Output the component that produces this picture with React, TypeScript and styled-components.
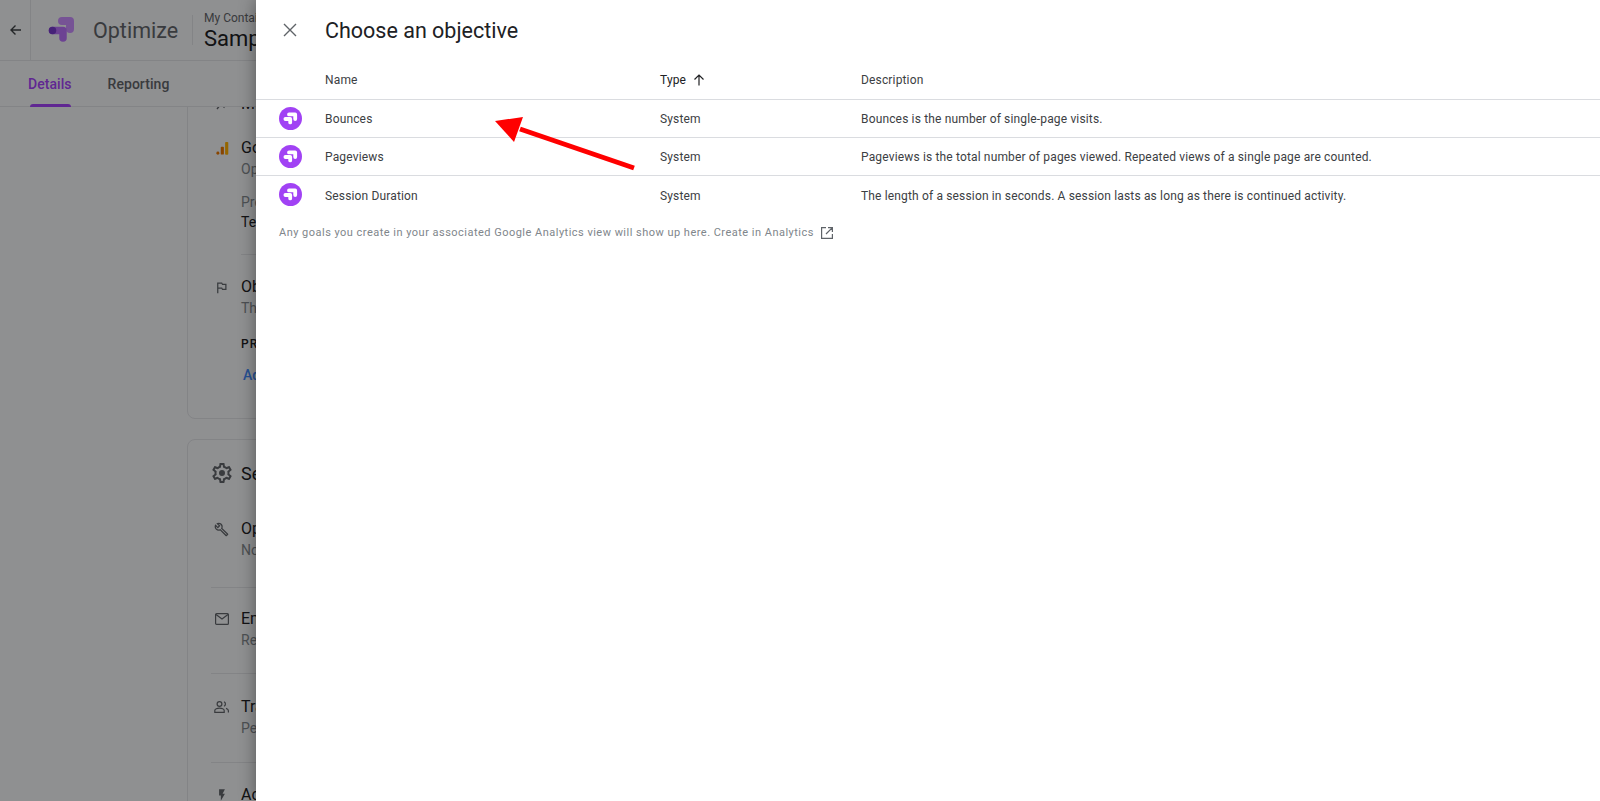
import React from "react";
import styled, { createGlobalStyle } from "styled-components";

const Global = createGlobalStyle`
  html, body { margin: 0; padding: 0; height: 100%; background: #eff0f2; }
  body { font-family: Roboto, "Liberation Sans", sans-serif; color: #202124; }
  #root { height: 100%; }
`;

const Screen = styled.div`
  position: relative;
  width: 1600px;
  height: 801px;
  overflow: hidden;
  background: #eff0f2;
`;

const Page = styled.div`
  display: flex;
  flex-direction: column;
  height: 100%;
`;

const Header = styled.header`
  display: flex;
  align-items: center;
  height: 61px;
  box-sizing: border-box;
  border-bottom: 1px solid #dadce0;
  flex: none;
`;

const BackCell = styled.div`
  width: 31px;
  height: 60px;
  box-sizing: border-box;
  padding-left: 2px;
  display: flex;
  align-items: center;
  justify-content: center;
  border-right: 1px solid #dadce0;
  color: #3c4043;
  flex: none;
`;

const Logo = styled.svg`
  width: 26px;
  height: 26px;
  margin-left: 17px;
  flex: none;
`;

const Product = styled.div`
  font-size: 21.5px;
  color: #5f6368;
  margin-left: 19px;
  width: 99px;
  flex: none;
`;

const Divider = styled.div`
  width: 1px;
  height: 30px;
  background: #dadce0;
  flex: none;
`;

const Crumbs = styled.div`
  margin-left: 11px;
  padding-top: 2px;
  display: flex;
  flex-direction: column;
  white-space: nowrap;
`;

const CrumbTop = styled.div`
  font-size: 12px;
  line-height: 15px;
  color: #5f6368;
`;

const CrumbName = styled.div`
  font-size: 22px;
  line-height: 26px;
  color: #202124;
`;

const Tabs = styled.nav`
  display: flex;
  height: 46px;
  box-sizing: border-box;
  border-bottom: 1px solid #dadce0;
  padding-left: 28px;
  gap: 36px;
  flex: none;
`;

const Tab = styled.div<{ $active?: boolean }>`
  position: relative;
  font-size: 14px;
  font-weight: 500;
  letter-spacing: 0.05px;
  line-height: 46px;
  height: 45px;
  color: ${(p) => (p.$active ? "#a142f4" : "#5f6368")};
  &::after {
    content: "";
    display: ${(p) => (p.$active ? "block" : "none")};
    position: absolute;
    left: 2px;
    right: 1px;
    bottom: -1px;
    height: 3px;
    border-radius: 3px 3px 0 0;
    background: #a142f4;
  }
`;

const Scroller = styled.main`
  flex: 1;
  overflow: hidden;
  padding-left: 187px;
`;

const Card = styled.section`
  width: 1200px;
  box-sizing: border-box;
  border: 1px solid #dadce0;
  border-radius: 8px;
  padding: 0 23px;
  margin-bottom: 20px;
  &:first-child {
    margin-top: -48px;
    height: 360px;
    padding-top: 34px;
  }
`;

const CardTitle = styled.div`
  display: flex;
  align-items: center;
  gap: 7px;
  font-size: 18px;
  color: #202124;
  height: 24px;
  margin: 21px 0 34px -1px;
`;

const SmallTitle = styled.div`
  display: flex;
  align-items: center;
  gap: 12px;
  font-size: 16px;
  color: #202124;
  height: 18px;
  margin-bottom: 26px;
`;

const Row = styled.div<{ $h: number; $line?: boolean; $pt?: number }>`
  display: flex;
  gap: 12px;
  height: ${(p) => p.$h}px;
  box-sizing: border-box;
  border-bottom: ${(p) => (p.$line ? "1px solid #dadce0" : "none")};
  padding-top: ${(p) => p.$pt ?? 0}px;
`;

const RowIcon = styled.div`
  width: 18px;
  height: 20px;
  display: flex;
  align-items: center;
  justify-content: flex-end;
  color: #5f6368;
  flex: none;
`;

const RowBody = styled.div`
  flex: 1;
`;

const RowTitle = styled.div`
  font-size: 16px;
  line-height: 20px;
  color: #202124;
`;

const RowSub = styled.div`
  font-size: 14px;
  line-height: 20px;
  margin-top: 1px;
  color: #80868b;
`;

const FieldLabel = styled(RowSub)`
  margin-top: 13px;
`;

const FieldValue = styled.div`
  font-size: 14px;
  line-height: 20px;
  color: #202124;
`;

const RuleAfter = styled.div`
  height: 1px;
  background: #dadce0;
  margin: 22px 0;
`;

const Caps = styled.div`
  font-size: 12px;
  line-height: 14px;
  font-weight: 500;
  letter-spacing: 1px;
  margin-top: 19px;
  color: #202124;
`;

const LinkText = styled.div`
  font-size: 14px;
  font-weight: 500;
  line-height: 20px;
  margin: 14px 0 0 2px;
  color: #4285f4;
`;

const Scrim = styled.div`
  position: absolute;
  inset: 0;
  background: rgba(0, 0, 0, 0.4);
`;

const Drawer = styled.aside`
  position: absolute;
  top: 0;
  bottom: 0;
  left: 256px;
  right: 0;
  background: #fff;
  box-shadow: 0 0 16px rgba(0, 0, 0, 0.4);
`;

const DrawerHeader = styled.div`
  display: flex;
  align-items: center;
  height: 60px;
  padding-left: 26px;
  gap: 27px;
`;

const DrawerTitle = styled.h1`
  margin: 0;
  font-size: 21.5px;
  font-weight: 400;
  color: #202124;
`;

const TableRow = styled.div<{ $head?: boolean; $line?: boolean }>`
  display: grid;
  grid-template-columns: 46px 335px 201px 1fr;
  align-items: center;
  box-sizing: border-box;
  height: ${(p) => (p.$head ? 39.5 : 38)}px;
  padding-left: 23px;
  font-size: 12px;
  letter-spacing: 0.155px;
  color: #3c4043;
  border-bottom: ${(p) => (p.$line ? "1px solid #dadce0" : "none")};
`;

const Cell = styled.span`
  padding-top: 2px;
`;

const SortCell = styled.div`
  display: flex;
  align-items: center;
  gap: 7px;
  padding-top: 2px;
  color: #202124;
`;

const Badge = styled.svg`
  width: 23px;
  height: 23px;
  display: block;
`;

const Note = styled.div`
  display: flex;
  align-items: center;
  gap: 6px;
  padding: 12px 0 0 23px;
  font-size: 11px;
  letter-spacing: 0.48px;
  color: #80868b;
`;

const Annotation = styled.svg`
  position: absolute;
  left: 0;
  top: 0;
  pointer-events: none;
`;

const OptimizeBadge = () => (
  <Badge viewBox="0 0 23 23">
    <circle cx="11.5" cy="11.5" r="11.5" fill="#a142f4" />
    <g fill="none" stroke="#fff" strokeWidth="3.8" strokeLinejoin="round" strokeLinecap="round">
      <path d="M10 7.4H16.2V12" />
      <path d="M6.4 12H11.2V15.4" />
    </g>
  </Badge>
);

const rows = [
  ["Bounces", "Bounces is the number of single-page visits."],
  ["Pageviews", "Pageviews is the total number of pages viewed. Repeated views of a single page are counted."],
  ["Session Duration", "The length of a session in seconds. A session lasts as long as there is continued activity."],
];

const gearPath =
  "M19.43 12.98c.04-.32.07-.64.07-.98 0-.34-.03-.66-.07-.98l2.11-1.65c.19-.15.24-.42.12-.64l-2-3.46c-.09-.16-.26-.25-.44-.25-.06 0-.12.01-.17.03l-2.49 1c-.52-.4-1.08-.73-1.69-.98l-.38-2.65C14.46 2.18 14.25 2 14 2h-4c-.25 0-.46.18-.49.42l-.38 2.65c-.61.25-1.17.59-1.69.98l-2.49-1c-.06-.02-.12-.03-.18-.03-.17 0-.34.09-.43.25l-2 3.46c-.13.22-.07.49.12.64l2.11 1.65c-.04.32-.07.65-.07.98 0 .33.03.66.07.98l-2.11 1.65c-.19.15-.24.42-.12.64l2 3.46c.09.16.26.25.44.25.06 0 .12-.01.17-.03l2.49-1c.52.4 1.08.73 1.69.98l.38 2.65c.03.24.24.42.49.42h4c.25 0 .46-.18.49-.42l.38-2.65c.61-.25 1.17-.59 1.69-.98l2.49 1c.06.02.12.03.18.03.17 0 .34-.09.43-.25l2-3.46c.12-.22.07-.49-.12-.64l-2.11-1.65zm-1.98-1.71c.04.31.05.52.05.73 0 .21-.02.43-.05.73l-.14 1.13.89.7 1.08.84-.7 1.21-1.27-.51-1.04-.42-.9.68c-.43.32-.84.56-1.25.73l-1.06.43-.16 1.13-.2 1.35h-1.4l-.19-1.35-.16-1.13-1.06-.43c-.43-.18-.83-.41-1.23-.71l-.91-.7-1.06.43-1.27.51-.7-1.21 1.08-.84.89-.7-.14-1.13c-.03-.31-.05-.54-.05-.74s.02-.43.05-.73l.14-1.13-.89-.7-1.08-.84.7-1.21 1.27.51 1.04.42.9-.68c.43-.32.84-.56 1.25-.73l1.06-.43.16-1.13.2-1.35h1.39l.19 1.35.16 1.13 1.06.43c.43.18.83.41 1.23.71l.91.7 1.06-.43 1.27-.51.7 1.21-1.07.85-.89.7.14 1.13zM12 9a3 3 0 1 0 0 6 3 3 0 0 0 0-6z";

const buildPath =
  "M22.61 18.99l-9.08-9.08c.93-2.34.45-5.1-1.44-7C9.79.61 6.21.4 3.66 2.26L7.5 6.11 6.08 7.52 2.25 3.69C.39 6.23.6 9.82 2.9 12.11c1.86 1.86 4.57 2.35 6.89 1.48l9.11 9.11c.39.39 1.02.39 1.41 0l2.3-2.3c.4-.38.4-1.01 0-1.41zm-3 1.6l-9.46-9.46c-.61.45-1.29.72-2 .82-1.36.2-2.79-.21-3.83-1.25C3.37 9.76 2.93 8.5 3 7.26l3.09 3.09 4.24-4.24-3.09-3.09c1.24-.07 2.49.37 3.44 1.31 1.08 1.08 1.49 2.57 1.24 3.96-.12.71-.42 1.37-.88 1.96l9.45 9.45-.88.88z";

export default function App() {
  return (
    <Screen>
      <Global />
      <Page>
        <Header>
          <BackCell>
            <svg width="14" height="14" viewBox="0 0 14 14" fill="none" stroke="currentColor" strokeWidth="1.4">
              <path d="M12 7H2M6.5 2.5 2 7l4.5 4.5" />
            </svg>
          </BackCell>
          <Logo viewBox="0 0 26 26" fill="none" strokeLinejoin="round" strokeLinecap="round">
            <path d="M14 4H22V12" stroke="#c58af9" strokeWidth="8" />
            <path d="M4.5 13.5H15V21" stroke="#b56ff5" strokeWidth="7.5" />
            <circle cx="4.5" cy="13.5" r="3.75" fill="#7539c8" />
          </Logo>
          <Product>Optimize</Product>
          <Divider />
          <Crumbs>
            <CrumbTop>My Container</CrumbTop>
            <CrumbName>Sample</CrumbName>
          </Crumbs>
        </Header>
        <Tabs>
          <Tab $active>Details</Tab>
          <Tab>Reporting</Tab>
        </Tabs>
        <Scroller>
          <Card>
            <SmallTitle>
              <RowIcon>
                <svg width="13" height="13" viewBox="0 0 13 13" fill="none" stroke="currentColor" strokeWidth="1.4">
                  <path d="M1 12l4-5 3 3 4-7" />
                </svg>
              </RowIcon>
              Measurement
            </SmallTitle>
            <Row $h={139}>
              <RowIcon>
                <svg width="13" height="14" viewBox="0 0 14 16">
                  <rect x="0" y="12" width="3.4" height="3.6" rx="1.7" fill="#e37400" />
                  <rect x="5" y="6.5" width="3.6" height="9" rx="1" fill="#e37400" />
                  <rect x="10" y="1" width="3.6" height="14.6" rx="1" fill="#f9ab00" />
                </svg>
              </RowIcon>
              <RowBody>
                <RowTitle>Google Analytics</RowTitle>
                <RowSub>Optimize is linked to a view</RowSub>
                <FieldLabel>Property</FieldLabel>
                <FieldValue>Test</FieldValue>
                <RuleAfter />
              </RowBody>
            </Row>
            <Row $h={140}>
              <RowIcon>
                <svg width="15" height="15" viewBox="0 0 24 24" fill="currentColor">
                  <path d="M14 6l-1-2H5v17h2v-7h5l1 2h7V6h-6zm4 8h-4l-1-2H7V6h5l1 2h5v6z" />
                </svg>
              </RowIcon>
              <RowBody>
                <RowTitle>Objectives</RowTitle>
                <RowSub>The objectives of this experience</RowSub>
                <Caps>PRIMARY OBJECTIVE</Caps>
                <LinkText>Add experiment objective</LinkText>
              </RowBody>
            </Row>
          </Card>
          <Card>
            <CardTitle>
              <svg width="24" height="24" viewBox="0 0 24 24" fill="#5f6368">
                <path d={gearPath} />
              </svg>
              Settings
            </CardTitle>
            <Row $h={69} $line>
              <RowIcon>
                <svg width="15" height="15" viewBox="0 0 24 24" fill="currentColor">
                  <path d={buildPath} />
                </svg>
              </RowIcon>
              <RowBody>
                <RowTitle>Optimize snippet</RowTitle>
                <RowSub>Not installed</RowSub>
              </RowBody>
            </Row>
            <Row $h={86} $line $pt={21}>
              <RowIcon>
                <svg width="14" height="12" viewBox="0 0 14 12" fill="none" stroke="currentColor" strokeWidth="1.2">
                  <rect x="0.6" y="0.6" width="12.8" height="10.8" rx="1" />
                  <path d="M1 1.5l6 4.5 6-4.5" />
                </svg>
              </RowIcon>
              <RowBody>
                <RowTitle>Email notifications</RowTitle>
                <RowSub>Receive updates by email</RowSub>
              </RowBody>
            </Row>
            <Row $h={89} $line $pt={23}>
              <RowIcon>
                <svg width="15" height="12" viewBox="0 0 15 12" fill="none" stroke="currentColor" strokeWidth="1.2">
                  <circle cx="5.5" cy="3" r="2.4" />
                  <path d="M.8 11.4V9.6c0-1.6 2.4-2.4 4.7-2.4s4.7.8 4.7 2.4v1.8zM10 .8a2.4 2.4 0 0 1 0 4.4M12 7.4c1.4.4 2.4 1.2 2.4 2.4v1.6" />
                </svg>
              </RowIcon>
              <RowBody>
                <RowTitle>Traffic allocation</RowTitle>
                <RowSub>Percentage of visitors</RowSub>
              </RowBody>
            </Row>
            <Row $h={60} $pt={22}>
              <RowIcon>
                <svg width="14" height="14" viewBox="0 0 24 24" fill="currentColor">
                  <path d="M7 2v11h3v9l7-12h-4l4-8z" />
                </svg>
              </RowIcon>
              <RowBody>
                <RowTitle>Activation event</RowTitle>
              </RowBody>
            </Row>
          </Card>
        </Scroller>
      </Page>
      <Scrim />
      <Drawer>
        <DrawerHeader>
          <svg width="16" height="16" viewBox="0 0 16 16" fill="none" stroke="#5f6368" strokeWidth="1.4">
            <path d="M2 2l12 12M14 2 2 14" />
          </svg>
          <DrawerTitle>Choose an objective</DrawerTitle>
        </DrawerHeader>
        <TableRow $head $line>
          <span />
          <Cell>Name</Cell>
          <SortCell>
            Type
            <svg width="12" height="12" viewBox="0 0 12 12" fill="none" stroke="#202124" strokeWidth="1.2">
              <path d="M6 11.5V1M1.5 5.5 6 1l4.5 4.5" />
            </svg>
          </SortCell>
          <Cell>Description</Cell>
        </TableRow>
        {rows.map(([name, desc], i) => (
          <TableRow key={name} $line={i < rows.length - 1}>
            <OptimizeBadge />
            <Cell>{name}</Cell>
            <Cell>System</Cell>
            <Cell>{desc}</Cell>
          </TableRow>
        ))}
        <Note>
          Any goals you create in your associated Google Analytics view will show up here. Create in Analytics
          <svg width="14" height="14" viewBox="0 0 14 14" fill="none" stroke="#5f6368" strokeWidth="1.2">
            <path d="M6 1.6H1.6v10.8h10.8V8M8 1.6h4.4V6M12.4 1.6 6 8" />
          </svg>
        </Note>
      </Drawer>
      <Annotation width="1600" height="801" viewBox="0 0 1600 801">
        <path d="M634 168 520 129" stroke="#ff0000" strokeWidth="5" />
        <path d="M495 121 523 117 514 142z" fill="#ff0000" />
      </Annotation>
    </Screen>
  );
}
